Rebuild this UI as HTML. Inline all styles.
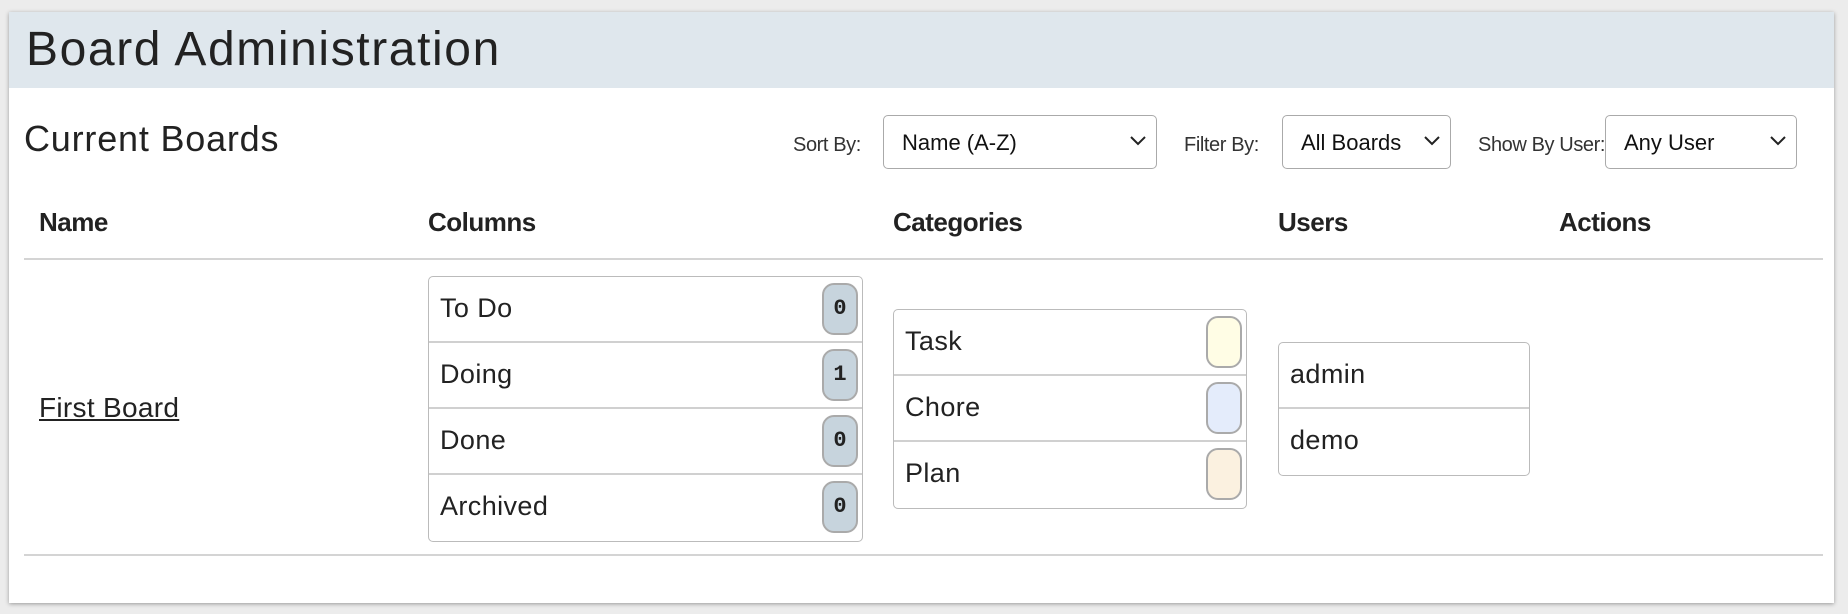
<!DOCTYPE html>
<html><head><meta charset="utf-8"><style>
*{box-sizing:border-box;margin:0;padding:0}
body{width:1848px;height:614px;background:#ececec;font-family:"Liberation Sans",sans-serif;color:#222;position:relative;overflow:hidden}
.panel{position:absolute;left:9px;top:12px;width:1825px;height:591px;background:#fff;box-shadow:0 1px 4px rgba(0,0,0,.35)}
.hdr{position:absolute;left:0;top:0;width:100%;height:76px;background:#dfe7ed}
.abs{position:absolute;white-space:nowrap}
.title{left:17px;top:10px;font-size:48px;letter-spacing:1.6px;color:#222}
.cur{left:15px;top:106px;font-size:36px;letter-spacing:0.8px;color:#222}
.lbl{font-size:20px;letter-spacing:-0.4px;color:#333;top:122px}
.sel{position:absolute;top:103px;height:54px;border:1px solid #aaa;border-radius:5px;font-size:22px;padding:14px 0 0 18px;color:#111}
.sel svg{position:absolute;right:10px;top:20px}
.th{top:195px;font-size:26px;font-weight:bold;color:#222;letter-spacing:-0.5px}
.line{position:absolute;left:15px;width:1799px;height:2px;background:#d4d4d4}
.list{position:absolute;border:1px solid #bbb;border-radius:5px;background:#fff}
.item{height:66px;border-bottom:2px solid #d0d0d0;position:relative;font-size:27px;letter-spacing:0.4px;color:#222;padding:16px 0 0 11px}
.item:last-child{border-bottom:none}
.badge{position:absolute;right:4px;top:6px;width:36px;height:52px;border:2px solid #aaa;border-radius:12px;background:#c7d4dd;font-family:"Liberation Mono",monospace;font-weight:bold;font-size:22px;text-align:center;padding-top:11px;color:#222;letter-spacing:0}
.sw{position:absolute;right:4px;top:6px;width:36px;height:52px;border:2px solid #aaa;border-radius:12px}
</style></head><body>
<div class="panel">
<div class="hdr"></div>
<div class="abs title">Board Administration</div>
<div class="abs cur">Current Boards</div>
<div class="abs lbl" style="left:784px">Sort By:</div>
<div class="sel" style="left:874px;width:274px">Name (A-Z)<svg width="16" height="10"><path d="M1 1l7 7 7-7" stroke="#222" stroke-width="2" fill="none"/></svg></div>
<div class="abs lbl" style="left:1175px">Filter By:</div>
<div class="sel" style="left:1273px;width:169px">All Boards<svg width="16" height="10"><path d="M1 1l7 7 7-7" stroke="#222" stroke-width="2" fill="none"/></svg></div>
<div class="abs lbl" style="left:1469px">Show By User:</div>
<div class="sel" style="left:1596px;width:192px">Any User<svg width="16" height="10"><path d="M1 1l7 7 7-7" stroke="#222" stroke-width="2" fill="none"/></svg></div>
<div class="abs th" style="left:30px">Name</div>
<div class="abs th" style="left:419px">Columns</div>
<div class="abs th" style="left:884px">Categories</div>
<div class="abs th" style="left:1269px">Users</div>
<div class="abs th" style="left:1550px">Actions</div>
<div class="line" style="top:246px"></div>
<div class="abs" style="left:30px;top:380px;font-size:28px;letter-spacing:0.3px;text-decoration:underline;color:#222">First Board</div>
<div class="list" style="left:419px;top:264px;width:435px">
<div class="item">To Do<div class="badge">0</div></div>
<div class="item">Doing<div class="badge">1</div></div>
<div class="item">Done<div class="badge">0</div></div>
<div class="item">Archived<div class="badge">0</div></div>
</div>
<div class="list" style="left:884px;top:297px;width:354px">
<div class="item">Task<div class="sw" style="background:#fffde5"></div></div>
<div class="item">Chore<div class="sw" style="background:#e4ecfb"></div></div>
<div class="item">Plan<div class="sw" style="background:#fbf1e0"></div></div>
</div>
<div class="list" style="left:1269px;top:330px;width:252px">
<div class="item">admin</div>
<div class="item">demo</div>
</div>
<div class="line" style="top:542px"></div>
</div>
</body></html>
